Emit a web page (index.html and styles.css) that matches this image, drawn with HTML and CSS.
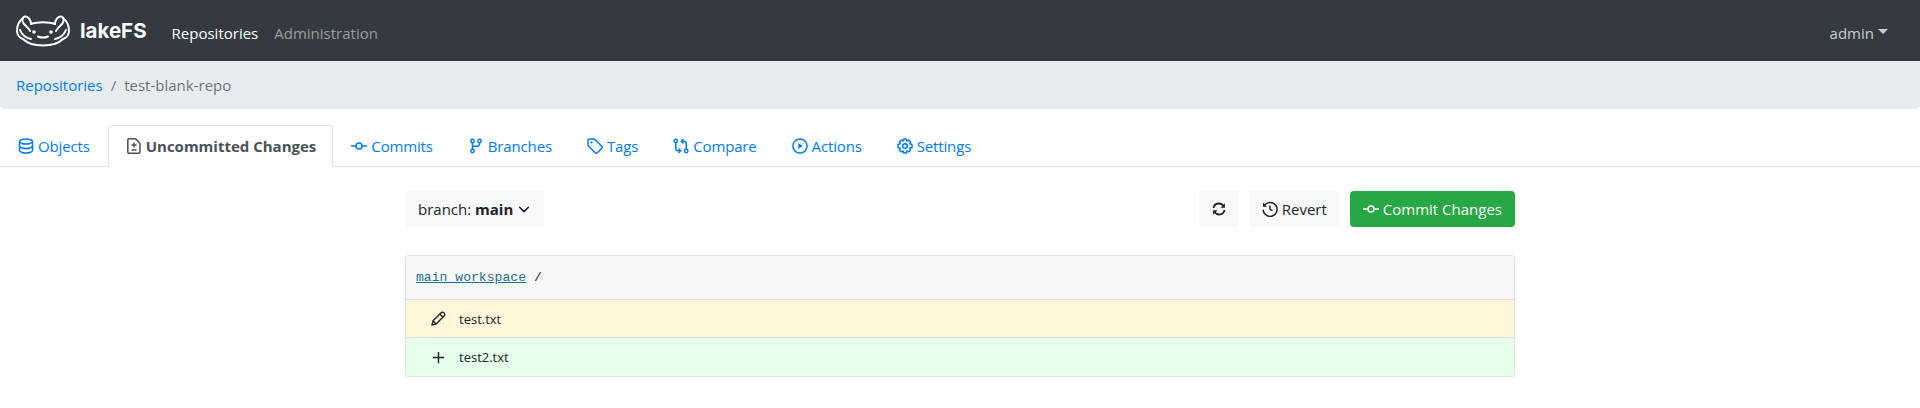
FILE: index.html
```html
<!DOCTYPE html>
<html lang="en">

<head>
  <meta charset="UTF-8">
  <meta name="viewport" content="width=device-width, initial-scale=1.0">
  <title>lakeFS</title>
  <link rel="stylesheet" href="styles.css">
</head>

<body>
  <nav class="navbar">
    <a class="brand" href="#">
      <svg class="brand-logo" width="54" height="32" viewBox="0 0 54 32" fill="none" stroke="#fff" stroke-width="2" stroke-linecap="round" stroke-linejoin="round">
        <path d="M15 9C21 6.500 33 6.500 39 9" />
        <path d="M15 9C15 5 12 1 9 1.500C6 2 5.500 6 8 9C10 11.500 13 13 14 16" />
        <path d="M39 9C39 5 42 1 45 1.500C48 2 48.500 6 46 9C44 11.500 41 13 40 16" />
        <path d="M7 3C3 6 1 11 1 16C1 20 4 23 7 24C12 29 20 30.500 27 30.500C34 30.500 42 29 47 24C50 23 53 20 53 16C53 11 51 6 47 3" />
        <path d="M4 15C6 20 10 23 15 24" />
        <path d="M50 15C48 20 44 23 39 24" />
        <path d="M22 21.500C25 22.800 29 22.800 32 21.500" />
        <circle cx="18" cy="17" r="1.800" fill="#fff" stroke="none" />
        <circle cx="35" cy="17" r="1.800" fill="#fff" stroke="none" />
      </svg>
      <span class="brand-name">lakeFS</span>
    </a>
    <a class="nav-link active" href="#">Repositories</a>
    <a class="nav-link" href="#">Administration</a>
    <a class="nav-user" href="#">admin<span class="caret"></span></a>
  </nav>

  <div class="breadcrumb">
    <a href="#">Repositories</a>
    <span class="crumb-sep">/</span>
    <span class="crumb-current">test-blank-repo</span>
  </div>

  <div class="tabs">
    <a class="tab" href="#">
      <svg class="icon" viewBox="0 0 16 16" fill="none" stroke="currentColor" stroke-width="1.500"><path d="M1.500 3.500C1.500 2.300 4.500 1 8 1S14.500 2.300 14.500 3.500V12.500C14.500 13.700 11.500 15 8 15S1.500 13.700 1.500 12.500Z" /><path d="M1.500 3.500C1.500 4.700 4.500 6 8 6S14.500 4.700 14.500 3.500M1.500 8C1.500 9.200 4.500 10.500 8 10.500S14.500 9.200 14.500 8" /></svg>
      Objects
    </a>
    <a class="tab tab-active" href="#">
      <svg class="icon" viewBox="0 0 16 16" fill="none" stroke="currentColor" stroke-width="1.500"><path d="M3 .8H9.500L14 5.250V14C14 14.700 13.500 15.200 12.800 15.200H3C2.300 15.200 1.800 14.700 1.800 14V2C1.800 1.300 2.300 .8 3 .8Z" /><path d="M8 4.500V9.500M5.500 7H10.500M5.500 12H10.500" /></svg>
      Uncommitted Changes
    </a>
    <a class="tab" href="#">
      <svg class="icon" viewBox="0 0 16 16" fill="none" stroke="currentColor" stroke-width="1.500"><circle cx="8" cy="8" r="3" /><path d="M0 8H5M11 8H16" /></svg>
      Commits
    </a>
    <a class="tab" href="#">
      <svg class="icon" viewBox="0 0 16 16" fill="none" stroke="currentColor" stroke-width="1.500"><circle cx="4.500" cy="3" r="1.700" /><circle cx="4.500" cy="13" r="1.700" /><circle cx="11.500" cy="3" r="1.700" /><path d="M4.500 4.700V11.300M11.500 4.700V6C11.500 7.500 10.500 8.250 9 8.250H6C5 8.250 4.500 8.800 4.500 9.500" /></svg>
      Branches
    </a>
    <a class="tab" href="#">
      <svg class="icon" viewBox="0 0 16 16" fill="none" stroke="currentColor" stroke-width="1.500" stroke-linejoin="round"><path d="M1 2.200C1 1.500 1.500 1 2.200 1H7.500L15 8.500C15.400 9 15.400 9.500 15 10L10 15C9.500 15.400 9 15.400 8.500 15L1 7.500Z" /><circle cx="4.500" cy="4.500" r="1.100" fill="currentColor" stroke="none" /></svg>
      Tags
    </a>
    <a class="tab" href="#">
      <svg class="icon" viewBox="0 0 16 16" fill="none" stroke="currentColor" stroke-width="1.500" stroke-linejoin="round"><circle cx="2.750" cy="3" r="1.700" /><circle cx="13.250" cy="13" r="1.700" /><path d="M2.750 4.700V10.500C2.750 11.800 3.700 12.750 5 12.750H7.500M5.500 10.500L7.800 12.750L5.500 15" /><path d="M13.250 11.300V5.500C13.250 4.200 12.300 3.250 11 3.250H8.500M10.500 1L8.200 3.250L10.500 5.500" /></svg>
      Compare
    </a>
    <a class="tab" href="#">
      <svg class="icon" viewBox="0 0 16 16" fill="none" stroke="currentColor" stroke-width="1.500"><circle cx="8" cy="8" r="7.100" /><path d="M6.300 5.200L10.800 8L6.300 10.800Z" fill="currentColor" stroke="none" /></svg>
      Actions
    </a>
    <a class="tab" href="#">
      <svg class="icon" viewBox="0 0 16 16" fill="none" stroke="currentColor" stroke-width="1.500" stroke-linejoin="round"><circle cx="8" cy="8" r="2.300" /><path d="M6.700 1H9.300L9.800 3L11.700 2.100L13.600 4L12.700 5.800L15 6.500V9.500L12.700 10.200L13.600 12L11.700 13.900L9.800 13L9.300 15H6.700L6.200 13L4.300 13.900L2.400 12L3.300 10.200L1 9.500V6.500L3.300 5.800L2.400 4L4.300 2.100L6.200 3Z" /></svg>
      Settings
    </a>
  </div>

  <main class="content">
    <div class="toolbar">
      <button class="btn btn-light"><span>branch: <strong>main</strong></span>
        <svg class="chevron" viewBox="0 0 16 16" fill="none" stroke="currentColor" stroke-width="1.800" stroke-linecap="round" stroke-linejoin="round"><path d="M3 6L8 11L13 6" /></svg>
      </button>
      <div class="toolbar-actions">
        <button class="btn btn-light btn-icon">
          <svg class="icon" viewBox="-1 -1 18 18" fill="none" stroke="currentColor" stroke-width="2"><path d="M1.800 7C2.300 3.800 5 1.800 8 1.800C10.200 1.800 12 2.900 13.200 4.800" /><path d="M14.200 9C13.700 12.200 11 14.200 8 14.200C5.800 14.200 4 13.100 2.800 11.200" /><path d="M14.700 1.500V6.500H9.700Z" fill="currentColor" stroke="none" /><path d="M1.300 14.500V9.500H6.300Z" fill="currentColor" stroke="none" /></svg>
        </button>
        <button class="btn btn-light">
          <svg class="icon" viewBox="0 0 16 16" fill="none" stroke="currentColor" stroke-width="1.500"><path d="M2.800 3.800A7 7 0 1 1 1.100 8.800" /><path d="M1 1.600V5.800H5.200Z" fill="currentColor" stroke="none" /><path d="M8 4.500V8.300L10.600 9.700" /></svg>
          Revert
        </button>
        <button class="btn btn-success">
          <svg class="icon" viewBox="0 0 16 16" fill="none" stroke="currentColor" stroke-width="1.500"><circle cx="8" cy="8" r="3" /><path d="M0 8H5M11 8H16" /></svg>
          Commit Changes
        </button>
      </div>
    </div>

    <div class="changes">
      <div class="changes-header"><a class="prefix" href="#">main_workspace</a><span class="prefix-sep">/</span></div>
      <div class="change-row row-changed">
        <svg class="row-icon" viewBox="0 0 16 16" fill="none" stroke="currentColor" stroke-width="1.500" stroke-linejoin="round"><path d="M1 15L2.200 10.500L10.800 1.900C11.600 1.100 13 1.100 13.900 2C14.900 3 14.900 4.300 14.100 5.100L5.500 13.800Z" /><path d="M9.500 3.500L12.500 6.500M2.200 10.500L5.500 13.800" /></svg>
        <span>test.txt</span>
      </div>
      <div class="change-row row-added">
        <svg class="row-icon" viewBox="0 0 16 16" fill="none" stroke="currentColor" stroke-width="1.500"><path d="M8 2V14M2 8H14" /></svg>
        <span>test2.txt</span>
      </div>
    </div>
  </main>
</body>

</html>
```

FILE: styles.css
```css
* {
  box-sizing: border-box;
}

body {
  margin: 0;
  font-family: "Open Sans", "Noto Sans", sans-serif;
  font-size: 15px;
  color: #212529;
  background: #fff;
}

a {
  text-decoration: none;
  color: #007bff;
}

.icon {
  width: 16px;
  height: 16px;
  flex: none;
}

.navbar {
  display: flex;
  align-items: center;
  height: 61px;
  padding: 0 32px 0 16px;
  background: #343a40;
}

.brand {
  display: flex;
  align-items: center;
  margin-right: 25px;
  color: #fff;
}

.brand-name {
  margin-left: 10px;
  font-family: "Inter", sans-serif;
  font-size: 20.500px;
  font-weight: 700;
}

.nav-link {
  margin-right: 16px;
  padding-top: 4px;
  color: rgba(255, 255, 255, 0.5);
}

.nav-link.active {
  color: #fff;
}

.nav-user {
  display: flex;
  align-items: center;
  margin-left: auto;
  padding-top: 4px;
  color: rgba(255, 255, 255, 0.75);
}

.caret {
  margin-left: 4px;
  margin-top: -3px;
  border-top: 5px solid rgba(255, 255, 255, 0.75);
  border-left: 5px solid transparent;
  border-right: 5px solid transparent;
}

.breadcrumb {
  display: flex;
  align-items: center;
  height: 48px;
  padding: 0 16px;
  background: #e9ecef;
  border-radius: 0 0 4px 4px;
}

.crumb-sep {
  margin: 0 8px;
  color: #6c757d;
}

.crumb-current {
  color: #6c757d;
}

.tabs {
  display: flex;
  height: 58px;
  padding-top: 16px;
  border-bottom: 1px solid #dee2e6;
}

.tab {
  display: flex;
  align-items: center;
  gap: 4px;
  height: 42px;
  padding: 0 16px 0 17px;
  border: 1px solid transparent;
  border-radius: 4px 4px 0 0;
  letter-spacing: -0.15px;
}

.tab-active {
  margin-left: 1px;
  letter-spacing: 0;
  font-weight: 700;
  color: #495057;
  background: #fff;
  border-color: #dee2e6 #dee2e6 #fff;
}

.content {
  width: 1140px;
  margin: 0 auto;
  padding: 0 15px;
}

.toolbar {
  display: flex;
  justify-content: space-between;
  margin-top: 24px;
}

.toolbar-actions {
  display: flex;
  gap: 10px;
}

.btn {
  display: flex;
  align-items: center;
  gap: 4px;
  height: 36px;
  padding: 0 12px;
  border: 1px solid transparent;
  border-radius: 4px;
  font-family: inherit;
  font-size: 15px;
}

.btn-light {
  color: #212529;
  background: #f8f9fa;
}

.btn-icon {
  padding: 0 11px;
}

.btn-success {
  color: #fff;
  background: #28a745;
}

.chevron {
  width: 14px;
  height: 14px;
}

.changes {
  margin-top: 28px;
  border: 1px solid #dfdfdf;
  border-radius: 4px;
  overflow: hidden;
  box-shadow: 0 1px 1px rgba(0, 0, 0, 0.1);
}

.changes-header {
  display: flex;
  align-items: center;
  height: 43px;
  padding: 0 10px;
  background: #f7f7f7;
  font-family: "Liberation Mono", monospace;
  font-size: 13.100px;
}

.prefix {
  color: #1f6f8b;
  text-decoration: underline;
}

.prefix-sep {
  margin-left: 8px;
}

.change-row {
  display: flex;
  align-items: center;
  height: 39px;
  padding-left: 25px;
  border-top: 1px solid #dfdfdf;
  font-size: 13px;
}

.row-icon {
  width: 15px;
  height: 15px;
  margin-right: 13px;
}

.row-changed {
  height: 38px;
  background: #fff5d9;
}

.row-added {
  background: #e6ffea;
}
```
